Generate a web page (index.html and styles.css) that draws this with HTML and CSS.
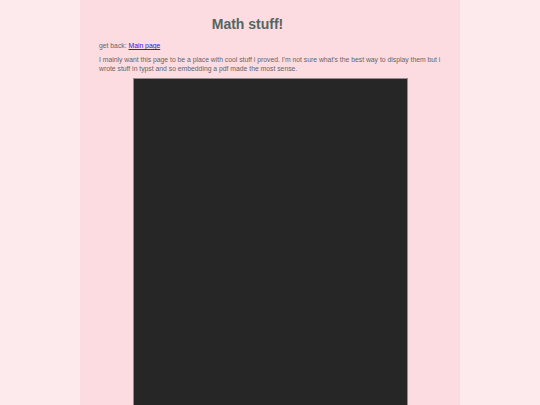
FILE: index.html
```html
<!DOCTYPE html>
<html>
<head>
<meta charset="utf-8">
<title>Math stuff!</title>
<link rel="stylesheet" href="styles.css">
</head>
<body>
<div class="page">
  <h1 class="title">Math stuff!</h1>
  <p class="back">get back: <a href="#">Main page</a></p>
  <p class="intro">I mainly want this page to be a place with cool stuff i proved. I'm not sure what's the best way to display them but i wrote stuff in typst and so embedding a pdf made the most sense.</p>
  <div class="viewer"></div>
</div>
</body>
</html>
```
FILE: styles.css
```css
html, body {
  margin: 0;
  padding: 0;
  height: 100%;
}
body {
  background: #fdeaed;
  font-family: "Liberation Sans", Arial, sans-serif;
  color: #666666;
  overflow: hidden;
}
.page {
  width: 380px;
  margin: 0 auto;
  min-height: 100%;
  background: #fcdbe1;
  padding: 14px 18px 0 19px;
  box-sizing: border-box;
}
.title {
  margin: 0;
  font-size: 14px;
  font-weight: bold;
  color: #56665f;
  text-align: center;
  padding-right: 46px;
  line-height: 20px;
}
.back {
  margin: 7px 0 0 0;
  font-size: 6.8px;
  line-height: 9px;
}
.back a {
  color: #2020ee;
}
.intro {
  margin: 5px 0 0 0;
  font-size: 6.8px;
  line-height: 9px;
}
.viewer {
  width: 273px;
  height: 340px;
  margin: 5px auto 0 auto;
  background: #262626;
  border: 1px solid #8f8f8f;
}
```
